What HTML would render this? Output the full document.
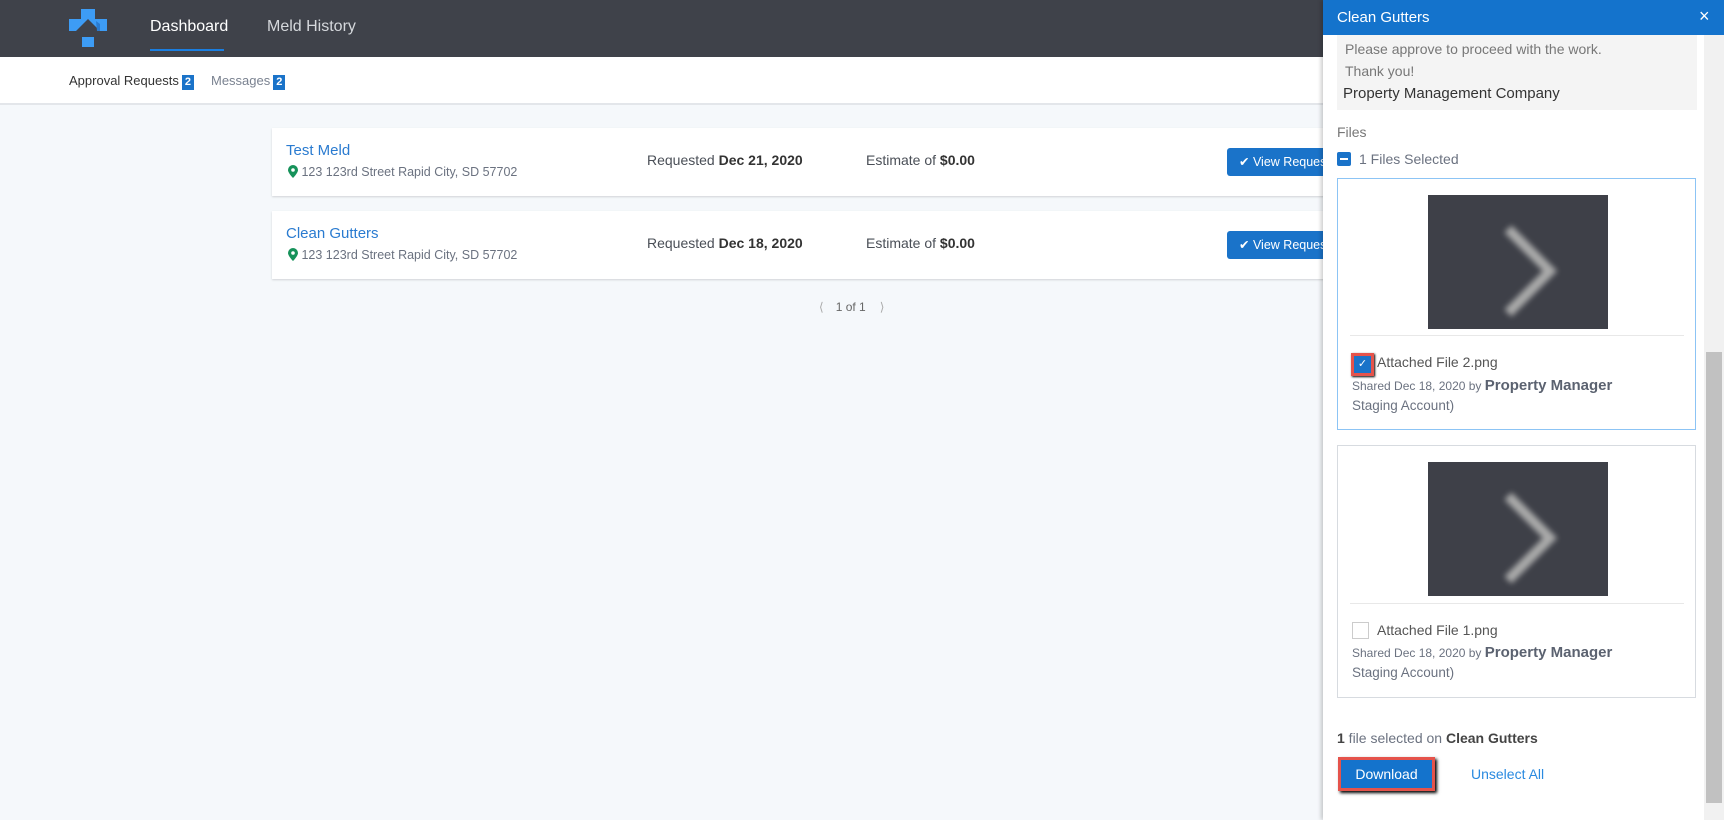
<!DOCTYPE html>
<html><head><style>
*{box-sizing:border-box;margin:0;padding:0}
body{width:1724px;height:820px;overflow:hidden;background:#f5f8fb;font-family:"Liberation Sans",sans-serif;position:relative;color:#4a4f57}
.abs{position:absolute}
.hdr{left:0;top:0;width:1724px;height:57px;background:#3f424a}
.sub{left:0;top:57px;width:1724px;height:48px;background:#fff;border-bottom:2px solid #e3e6ea}
.badge{display:inline-block;background:#1a73c9;color:#fff;font-size:11px;font-weight:bold;padding:1px 3px;margin-left:3px;line-height:13px}
.card{left:272px;width:1060px;height:68px;background:#fff;box-shadow:0 1px 2px rgba(0,0,0,.15)}
.ttl{color:#2a7bd0;font-size:15px}
.addr{font-size:12.5px;color:#6b7280}
.btn{background:#1a73c9;color:#fff;font-size:12.5px;border-radius:3px;height:28px;line-height:28px;padding-left:12px;width:120px}
.panel{left:1323px;top:0;width:401px;height:820px;background:#fff;box-shadow:-2px 0 4px rgba(0,0,0,.2)}
.fcard{border:1px solid #d7dbe0;background:#fff;width:359px;left:14px}
.img{left:90px;width:180px;height:134px;background:#3e4048}
</style></head><body>
<div class="abs hdr">
<svg class="abs" style="left:69px;top:9px" width="38" height="38" viewBox="0 0 38 38"><path d="M12 0h14v10h12v12h-7L19 10 7 22H0V10h12z" fill="#3d9cf5"/><path d="M27 12l4 3v7h-3z" fill="#2a7bd0"/><rect x="13" y="28" width="12" height="10" fill="#3d9cf5"/></svg>
<div class="abs" style="left:150px;top:18px;color:#fff;font-size:16px">Dashboard</div>
<div class="abs" style="left:150px;top:49px;width:74px;height:2px;background:#1a7ee0"></div>
<div class="abs" style="left:267px;top:18px;color:#d5d8dc;font-size:16px">Meld History</div>
</div>
<div class="abs sub">
<div class="abs" style="left:69px;top:16px;font-size:13px;color:#333">Approval Requests<span class="badge">2</span></div>
<div class="abs" style="left:211px;top:16px;font-size:13px;color:#7a8290">Messages<span class="badge">2</span></div>
</div>
<div class="abs card" style="top:128px">
<div class="abs ttl" style="left:14px;top:14px">Test Meld</div>
<div class="abs addr" style="left:16px;top:37px"><svg width="10" height="13" viewBox="0 0 10 13" style="vertical-align:-2px"><path d="M5 0a5 5 0 0 1 5 5c0 3-5 8-5 8S0 8 0 5a5 5 0 0 1 5-5z" fill="#16925a"/><circle cx="5" cy="5" r="1.8" fill="#fff"/></svg> 123 123rd Street Rapid City, SD 57702</div>
<div class="abs" style="left:375px;top:24px;font-size:14px">Requested <b style="color:#333">Dec 21, 2020</b></div>
<div class="abs" style="left:594px;top:24px;font-size:14px">Estimate of <b style="color:#333">$0.00</b></div>
<div class="abs btn" style="left:955px;top:20px">&#10004; View Request</div>
</div>
<div class="abs card" style="top:211px">
<div class="abs ttl" style="left:14px;top:14px">Clean Gutters</div>
<div class="abs addr" style="left:16px;top:37px"><svg width="10" height="13" viewBox="0 0 10 13" style="vertical-align:-2px"><path d="M5 0a5 5 0 0 1 5 5c0 3-5 8-5 8S0 8 0 5a5 5 0 0 1 5-5z" fill="#16925a"/><circle cx="5" cy="5" r="1.8" fill="#fff"/></svg> 123 123rd Street Rapid City, SD 57702</div>
<div class="abs" style="left:375px;top:24px;font-size:14px">Requested <b style="color:#333">Dec 18, 2020</b></div>
<div class="abs" style="left:594px;top:24px;font-size:14px">Estimate of <b style="color:#333">$0.00</b></div>
<div class="abs btn" style="left:955px;top:20px">&#10004; View Request</div>
</div>
<div class="abs" style="left:819px;top:300px;font-size:12px;color:#666"><span style="color:#aaa;margin-right:12px">&#10216;</span>1 of 1<span style="color:#aaa;margin-left:14px">&#10217;</span></div>

<div class="abs panel">
<div class="abs" style="left:0;top:0;width:401px;height:35px;background:#1473cc;color:#fff">
<div class="abs" style="left:14px;top:9px;font-size:15px">Clean Gutters</div>
<div class="abs" style="left:376px;top:6px;font-size:18px">&#215;</div>
</div>
<div class="abs" style="left:381px;top:35px;width:20px;height:785px;background:#f1f1f1"></div>
<div class="abs" style="left:383px;top:352px;width:16px;height:451px;background:#c1c1c1"></div>
<div class="abs" style="left:14px;top:35px;width:360px;height:75px;background:#f4f4f4;font-size:14px">
<div class="abs" style="left:8px;top:6px;color:#777">Please approve to proceed with the work.</div>
<div class="abs" style="left:8px;top:28px;color:#777">Thank you!</div>
<div class="abs" style="left:6px;top:50px;color:#333;font-size:15px">Property Management Company</div>
</div>
<div class="abs" style="left:14px;top:124px;font-size:14px;color:#777">Files</div>
<div class="abs" style="left:14px;top:152px;width:14px;height:14px;background:#1a73c9;border-radius:2px"><div class="abs" style="left:3px;top:6px;width:8px;height:2px;background:#fff"></div></div>
<div class="abs" style="left:36px;top:151px;font-size:14px;color:#6b7280">1 Files Selected</div>

<div class="abs fcard" style="top:178px;height:252px;border-color:#8cc4f5">
<div class="abs img" style="top:16px"><svg width="180" height="134"><path d="M80 34l42 42-42 42" stroke="#aaa" stroke-width="10" fill="none" style="filter:blur(3px)"/></svg></div>
<div class="abs" style="left:12px;top:156px;width:334px;height:1px;background:#e8e8e8"></div>
<div class="abs" style="left:13px;top:174px;width:23px;height:23px;border:3px solid #e5534b;box-shadow:1px 1px 2px #000"><div style="width:17px;height:17px;background:#1a73c9;color:#fff;font-size:11px;text-align:center;line-height:17px">&#10003;</div></div>
<div class="abs" style="left:39px;top:175px;font-size:14px;color:#555">Attached File 2.png</div>
<div class="abs" style="left:14px;top:198px;font-size:12px;color:#6b7280">Shared Dec 18, 2020 by <b style="font-size:15px;color:#5b6270">Property Manager</b></div>
<div class="abs" style="left:14px;top:219px;font-size:13.5px;color:#6b7280">Staging Account)</div>
</div>

<div class="abs fcard" style="top:445px;height:253px">
<div class="abs img" style="top:16px"><svg width="180" height="134"><path d="M80 34l42 42-42 42" stroke="#aaa" stroke-width="10" fill="none" style="filter:blur(3px)"/></svg></div>
<div class="abs" style="left:12px;top:157px;width:334px;height:1px;background:#e8e8e8"></div>
<div class="abs" style="left:14px;top:176px;width:17px;height:17px;border:1px solid #ccc"></div>
<div class="abs" style="left:39px;top:176px;font-size:14px;color:#555">Attached File 1.png</div>
<div class="abs" style="left:14px;top:198px;font-size:12px;color:#6b7280">Shared Dec 18, 2020 by <b style="font-size:15px;color:#5b6270">Property Manager</b></div>
<div class="abs" style="left:14px;top:219px;font-size:13.5px;color:#6b7280">Staging Account)</div>
</div>

<div class="abs" style="left:14px;top:730px;font-size:14px;color:#6b7280"><b style="color:#444">1</b> file selected on <b style="color:#444">Clean Gutters</b></div>
<div class="abs" style="left:15px;top:757px;width:97px;height:34px;border:3px solid #e5534b;box-shadow:2px 2px 3px #000;background:#1473cc;color:#fff;font-size:14px;text-align:center;line-height:28px">Download</div>
<div class="abs" style="left:148px;top:766px;font-size:14px;color:#2a8ae0">Unselect All</div>
</div>
</body></html>
